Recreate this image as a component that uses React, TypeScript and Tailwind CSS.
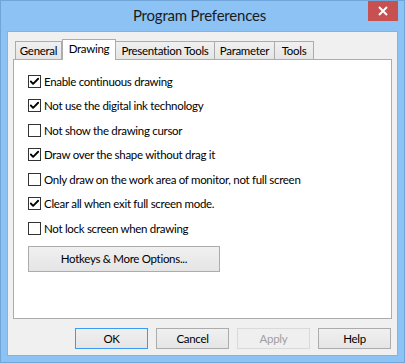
import { Check } from "lucide-react";

// Program Preferences — 드로잉 탭 (Win8 스타일 대화상자)
const TABS = ["General", "Drawing", "Presentation Tools", "Parameter", "Tools"];
const TAB_W: Record<string, string> = {
  General: "w-[47px]",
  Drawing: "w-[54px]",
  "Presentation Tools": "w-[100px]",
  Parameter: "w-[61px]",
  Tools: "w-[40px]",
};

const OPTIONS: [string, boolean][] = [
  ["Enable continuous drawing", true],
  ["Not use the digital ink technology", true],
  ["Not show the drawing cursor", false],
  ["Draw over the shape without drag it", true],
  ["Only draw on the work area of monitor, not full screen", false],
  ["Clear all when exit full screen mode.", true],
  ["Not lock screen when drawing", false],
];

function CheckRow({ label, checked }: { label: string; checked: boolean }) {
  return (
    <div className="flex h-[24.5px] items-center gap-[3px]">
      <span className="flex h-[13px] w-[13px] shrink-0 items-center justify-center border border-[#333333] bg-white">
        {checked && <Check className="h-[11px] w-[11px] text-black" strokeWidth={4} />}
      </span>
      <span className="leading-none">{label}</span>
    </div>
  );
}

function DlgButton({
  children,
  variant = "normal",
}: {
  children: React.ReactNode;
  variant?: "normal" | "default" | "disabled";
}) {
  const cls =
    variant === "default"
      ? "border-[#3c9bf0] bg-gradient-to-b from-[#f0f0f0] to-[#e5e5e5] text-black"
      : variant === "disabled"
      ? "border-[#d9d9d9] bg-[#efefef] text-[#a0a0a0]"
      : "border-[#acacac] bg-gradient-to-b from-[#f0f0f0] to-[#e5e5e5] text-black";
  return (
    <button
      type="button"
      className={`flex h-[21px] w-[73px] items-center justify-center border ${cls}`}
    >
      {children}
    </button>
  );
}

export default function App() {
  return (
    <div
      className="flex h-[363px] w-[405px] flex-col border border-[#6fa5d8] bg-[#8cc3f4] text-[11.5px] tracking-[-0.3px] text-black"
      style={{ fontFamily: 'Lato, "Noto Sans", sans-serif' }}
    >
      {/* 타이틀 바 */}
      <div className="flex h-[30px] shrink-0 items-start">
        <div className="flex h-[29px] flex-1 items-center justify-center pl-[30px] text-[15px] tracking-[-0.2px] text-[#1b1b1b]">
          Program Preferences
        </div>
        <div className="mr-[6px] flex h-[20px] w-[30px] items-center justify-center bg-[#c75050] text-white">
          <svg width="10" height="10" viewBox="0 0 10 10">
            <path d="M1 1 L9 9 M9 1 L1 9" stroke="white" strokeWidth="2" />
          </svg>
        </div>
      </div>

      {/* 클라이언트 영역 */}
      <div className="mx-[6px] mb-[6px] flex flex-1 flex-col border border-[#7eb4e6] bg-[#f0f0f0] px-[5px] pt-[6px]">
        <div className="flex h-[21px] items-end pl-[2px]">
          {TABS.map((t) => {
            const sel = t === "Drawing";
            return (
              <div
                key={t}
                className={`relative flex shrink-0 items-center justify-center whitespace-nowrap border border-[#acacac] ${TAB_W[t]} ${
                  sel
                    ? "z-10 -mb-px h-[21px] border-b-0 bg-white pb-[2px]"
                    : "-ml-px h-[18px] border-b-0 bg-gradient-to-b from-[#f0f0f0] to-[#e5e5e5] first:ml-0"
                }`}
              >
                {t}
              </div>
            );
          })}
        </div>
        <div className="flex h-[260px] flex-col border border-[#acacac] bg-white pl-[14px] pt-[9px]">
          {OPTIONS.map(([l, c]) => (
            <CheckRow key={l} label={l} checked={c} />
          ))}
          <button
            type="button"
            className="mt-[5px] flex h-[26px] w-[192px] items-center justify-center border border-[#acacac] bg-gradient-to-b from-[#f0f0f0] to-[#e5e5e5]"
          >
            Hotkeys &amp; More Options...
          </button>
        </div>
        <div className="mt-[9px] flex justify-end gap-[8px] pr-[1px]">
          <DlgButton variant="default">OK</DlgButton>
          <DlgButton>Cancel</DlgButton>
          <DlgButton variant="disabled">Apply</DlgButton>
          <DlgButton>Help</DlgButton>
        </div>
      </div>
    </div>
  );
}
